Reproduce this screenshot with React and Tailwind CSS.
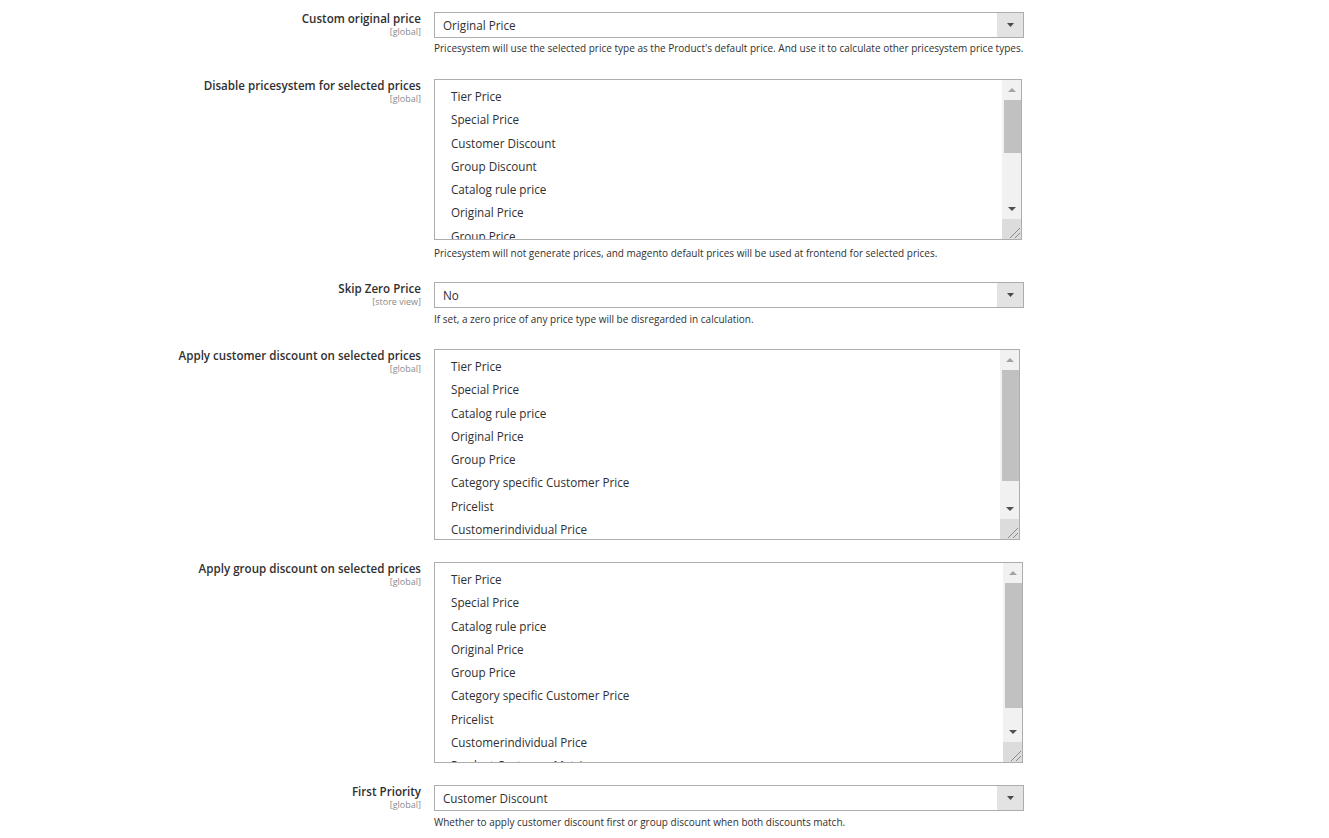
import React from "react";

const listA = [
  "Tier Price",
  "Special Price",
  "Customer Discount",
  "Group Discount",
  "Catalog rule price",
  "Original Price",
  "Group Price",
  "Category specific Customer Price",
];

const listB = [
  "Tier Price",
  "Special Price",
  "Catalog rule price",
  "Original Price",
  "Group Price",
  "Category specific Customer Price",
  "Pricelist",
  "Customerindividual Price",
  "Product Customer Matrix",
];

const Label = ({ title, scope }) => (
  <div className="text-right">
    <div className="text-[11.6px] leading-[14px] font-semibold text-[#303030]">{title}</div>
    <div className="text-[9px] leading-[11px] text-[#8a8a8a]">[{scope}]</div>
  </div>
);

const Note = ({ children, className = "" }) => (
  <div className={`text-[10px] leading-[14px] text-[#303030] ${className}`}>{children}</div>
);

const Select = ({ value }) => (
  <div className="flex h-[26px] w-[590px] border border-[#adadad] bg-white">
    <div className="flex-1 pl-[8px] text-[11.7px] leading-[24px] text-[#303030]">{value}</div>
    <div className="flex w-[26px] items-center justify-center bg-[#e3e3e3]">
      <svg width="7" height="4" viewBox="0 0 7 4">
        <path d="M0 0H7L3.5 4Z" fill="#4a4a4a" />
      </svg>
    </div>
  </div>
);

const Scrollbar = ({ thumbHeight }) => (
  <div className="absolute right-[-1px] top-[-1px] bottom-[-1px] w-[20px] flex flex-col bg-[#f1f1f1]">
    <div className="flex h-[21px] items-center justify-center">
      <svg width="8" height="4" viewBox="0 0 8 4">
        <path d="M0 4H8L4 0Z" fill="#a3a3a3" />
      </svg>
    </div>
    <div className="flex-1">
      <div className="ml-[2px] mr-[1px] bg-[#c1c1c1]" style={{ height: thumbHeight }} />
    </div>
    <div className="flex h-[21px] items-center justify-center">
      <svg width="8" height="4" viewBox="0 0 8 4">
        <path d="M0 0H8L4 4Z" fill="#505050" />
      </svg>
    </div>
    <div className="relative h-[21px] bg-[#dcdcdc]">
      <svg className="absolute right-[2px] bottom-[2px]" width="11" height="11" viewBox="0 0 11 11">
        <path d="M1 11L11 1M6 11L11 6" stroke="#8a8a8a" strokeWidth="1" />
      </svg>
    </div>
  </div>
);

const MultiSelect = ({ items, width, height, thumbHeight }) => (
  <div
    className="relative border border-[#adadad] bg-white overflow-hidden"
    style={{ width, height }}
  >
    <div className="pt-[5px] pl-[16px]">
      {items.map((item) => (
        <div key={item} className="h-[23.3px] text-[11.7px] leading-[23.3px] text-[#303030] whitespace-nowrap">
          {item}
        </div>
      ))}
    </div>
    <Scrollbar thumbHeight={thumbHeight} />
  </div>
);

const Row = ({ title, scope, children, className = "" }) => (
  <div className={`grid grid-cols-[421px_1fr] gap-x-[13px] ${className}`}>
    <Label title={title} scope={scope} />
    <div>{children}</div>
  </div>
);

export default function App() {
  return (
    <div className="min-h-screen bg-white pt-[12px] font-['Open_Sans',sans-serif]">
      <Row title="Custom original price" scope="global">
        <Select value="Original Price" />
        <Note className="mt-[3px]">
          Pricesystem will use the selected price type as the Product's default price. And use it to calculate other pricesystem price types.
        </Note>
      </Row>

      <Row title="Disable pricesystem for selected prices" scope="global" className="mt-[24px]">
        <MultiSelect items={listA} width={588} height={161} thumbHeight={53} />
        <Note className="mt-[6px]">
          Pricesystem will not generate prices, and magento default prices will be used at frontend for selected prices.
        </Note>
      </Row>

      <Row title="Skip Zero Price" scope="store view" className="mt-[22px]">
        <Select value="No" />
        <Note className="mt-[4px]">If set, a zero price of any price type will be disregarded in calculation.</Note>
      </Row>

      <Row title="Apply customer discount on selected prices" scope="global" className="mt-[23px]">
        <MultiSelect items={listB} width={586} height={191} thumbHeight={111} />
      </Row>

      <Row title="Apply group discount on selected prices" scope="global" className="mt-[22px]">
        <MultiSelect items={listB} width={589} height={201} thumbHeight={125} />
      </Row>

      <Row title="First Priority" scope="global" className="mt-[22px]">
        <Select value="Customer Discount" />
        <Note className="mt-[4px]">Whether to apply customer discount first or group discount when both discounts match.</Note>
      </Row>
    </div>
  );
}
